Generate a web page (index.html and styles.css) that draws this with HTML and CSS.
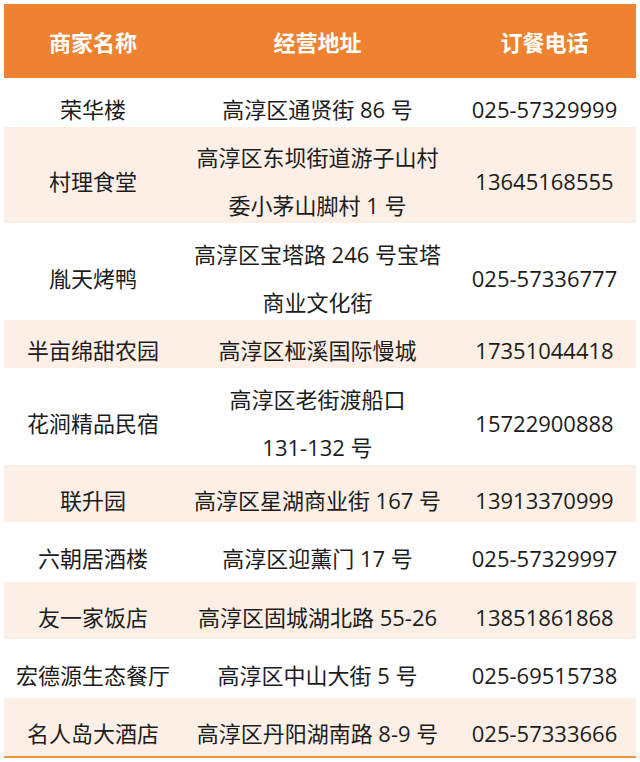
FILE: index.html
```html
<!DOCTYPE html>
<html lang="zh-CN">
<head>
<meta charset="utf-8">
<title>高淳餐饮商家</title>
<link rel="stylesheet" href="styles.css">
</head>
<body>
<div class="table">
  <div class="row head">
    <div class="cell">商家名称</div>
    <div class="cell">经营地址</div>
    <div class="cell">订餐电话</div>
  </div>
  <div class="row h49">
    <div class="cell">荣华楼</div>
    <div class="cell">高淳区通贤街 86 号</div>
    <div class="cell">025-57329999</div>
  </div>
  <div class="row alt h96">
    <div class="cell">村理食堂</div>
    <div class="cell">高淳区东坝街道游子山村<br>委小茅山脚村 1 号</div>
    <div class="cell">13645168555</div>
  </div>
  <div class="row h97">
    <div class="cell">胤天烤鸭</div>
    <div class="cell">高淳区宝塔路 246 号宝塔<br>商业文化街</div>
    <div class="cell">025-57336777</div>
  </div>
  <div class="row alt h48">
    <div class="cell">半亩绵甜农园</div>
    <div class="cell">高淳区桠溪国际慢城</div>
    <div class="cell">17351044418</div>
  </div>
  <div class="row h97">
    <div class="cell">花涧精品民宿</div>
    <div class="cell">高淳区老街渡船口<br>131-132 号</div>
    <div class="cell">15722900888</div>
  </div>
  <div class="row alt h57">
    <div class="cell">联升园</div>
    <div class="cell">高淳区星湖商业街 167 号</div>
    <div class="cell">13913370999</div>
  </div>
  <div class="row h60">
    <div class="cell">六朝居酒楼</div>
    <div class="cell">高淳区迎薰门 17 号</div>
    <div class="cell">025-57329997</div>
  </div>
  <div class="row alt h57">
    <div class="cell">友一家饭店</div>
    <div class="cell">高淳区固城湖北路 55-26</div>
    <div class="cell">13851861868</div>
  </div>
  <div class="row h59">
    <div class="cell">宏德源生态餐厅</div>
    <div class="cell">高淳区中山大街 5 号</div>
    <div class="cell">025-69515738</div>
  </div>
  <div class="row alt h58 last">
    <div class="cell">名人岛大酒店</div>
    <div class="cell">高淳区丹阳湖南路 8-9 号</div>
    <div class="cell">025-57333666</div>
  </div>
</div>
</body>
</html>
```
FILE: styles.css
```css
html, body {
  margin: 0;
  padding: 0;
  background: #ffffff;
}
body {
  font-family: "Open Sans", "Noto Sans CJK SC", sans-serif;
  color: #1c1c1c;
  font-size: 22px;
}
.table {
  margin: 4px 4px 0 4px;
  width: 632px;
  display: flex;
  flex-direction: column;
}
.row {
  display: grid;
  grid-template-columns: 178px 271px 183px;
  grid-template-rows: minmax(0, 1fr);
  box-sizing: border-box;
  background: #ffffff;
}
.row.alt {
  background: #fbefe6;
}
.row.last {
  border-bottom: 2px solid #f0913f;
}
.cell {
  display: flex;
  align-items: center;
  justify-content: center;
  text-align: center;
  line-height: 48px;
  padding-top: 12px;
  min-height: 0;
  box-sizing: border-box;
  white-space: nowrap;
}
.row.head {
  background: #ee8231;
  height: 74px;
}
.row.head .cell {
  color: #ffffff;
  font-weight: 700;
  padding-top: 2px;
}
.h48 { height: 48px; }
.h49 { height: 49px; }
.h57 { height: 57px; }
.h58 { height: 60px; }
.h59 { height: 59px; }
.h60 { height: 60px; }
.h96 { height: 96px; }
.h97 { height: 97px; }
```
